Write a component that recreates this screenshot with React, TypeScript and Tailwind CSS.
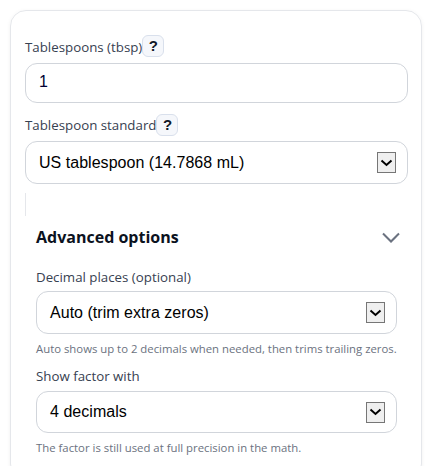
const SANS = "font-['Open_Sans','Noto_Sans',sans-serif]"

function Help() {
  return (
    <span className="w-[22px] h-[22px] rounded-md border border-[#d9e0ec] bg-[#f5f7fb] flex items-center justify-center text-[15px] font-bold text-[#111827] font-['Liberation_Sans',sans-serif]">
      ?
    </span>
  )
}

function FakeSelect({ value, className }: { value: string; className: string }) {
  return (
    <div className={`flex items-center justify-between border border-[#d1d5db] rounded-xl bg-white pl-[13px] pr-[11px] text-[16px] text-black font-['Liberation_Sans',sans-serif] ${className}`}>
      <span className="tracking-[0.03px]">{value}</span>
      <span className="w-[19px] h-[21px] border border-[#767676] bg-[#efefef] flex items-center justify-center">
        <svg width="13" height="8" viewBox="0 0 13 8" fill="none">
          <path d="M1.5 1.5 6.5 6 11.5 1.5" stroke="#000" strokeWidth="2" />
        </svg>
      </span>
    </div>
  )
}

export default function App() {
  return (
    <div className={`w-[434px] h-[466px] overflow-hidden bg-white pt-2.5 pl-2.5 ${SANS}`}>
      <div className="w-[412px] h-[470px] border border-[#e5e7eb] rounded-2xl shadow-[0_1px_4px_rgba(0,0,0,0.06)] pt-[24px] px-[14px]">
        <div className="flex items-center h-[22px] text-[13.3px] text-[#374151]">
          <span className="pt-[3px]">Tablespoons (tbsp)</span>
          <Help />
        </div>
        <input
          readOnly
          value="1"
          className="block mt-[6px] w-[383px] h-10 border border-[#d1d5db] rounded-xl px-[13px] pb-[2px] text-[16px] text-[#000033] font-['Liberation_Sans',sans-serif] outline-none"
        />
        <div className="flex items-center h-[22px] mt-[11px] text-[13.3px] text-[#374151]">
          <span className="pt-[2px]">Tablespoon standard</span>
          <Help />
        </div>
        <FakeSelect value="US tablespoon (14.7868 mL)" className="mt-[5px] w-[383px] h-[43px]" />
        <div className="mt-[9px] h-[23px] border-l border-[#e5e7eb]" />
        <div className="pl-[11px] w-[372px]">
          <div className="flex items-center justify-between h-[42px]">
            <span className="text-[16px] font-bold text-[#0b1220]">Advanced options</span>
            <svg width="18" height="11" viewBox="0 0 18 11" fill="none" className="mr-[-3px]">
              <path d="M1 1.5 9 9.5 17 1.5" stroke="#6b7280" strokeWidth="2" />
            </svg>
          </div>
          <div className="mt-[10px] h-[20px] flex items-center text-[13.3px] text-[#374151]">Decimal places (optional)</div>
          <FakeSelect value="Auto (trim extra zeros)" className="mt-[3px] h-[43px]" />
          <div className="mt-[5px] text-[11.35px] leading-[20px] whitespace-nowrap text-[#6b7280]">Auto shows up to 2 decimals when needed, then trims trailing zeros.</div>
          <div className="mt-[8px] h-[20px] flex items-center text-[13.3px] text-[#374151]">Show factor with</div>
          <FakeSelect value="4 decimals" className="mt-[4px] h-[42px]" />
          <div className="mt-[5px] text-[11.35px] leading-[20px] whitespace-nowrap text-[#6b7280]">The factor is still used at full precision in the math.</div>
        </div>
      </div>
    </div>
  )
}
